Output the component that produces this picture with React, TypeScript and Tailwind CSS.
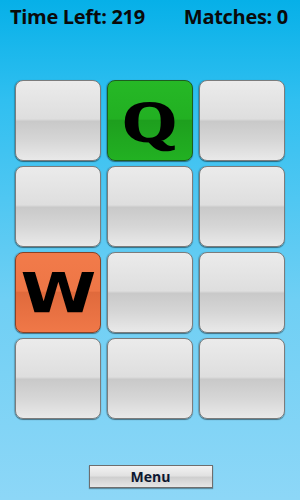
import React from "react";

type Tile = { kind: "grey" | "green" | "orange"; label?: string };

const tiles: Tile[] = [
  { kind: "grey" },
  { kind: "green", label: "Q" },
  { kind: "grey" },
  { kind: "grey" },
  { kind: "grey" },
  { kind: "grey" },
  { kind: "orange", label: "W" },
  { kind: "grey" },
  { kind: "grey" },
  { kind: "grey" },
  { kind: "grey" },
  { kind: "grey" },
];

function TileBox({ t }: { t: Tile }) {
  if (t.kind === "green") {
    return (
      <div className="relative h-[81px] rounded-[8px] border-[1.5px] border-[#1d5e1d] bg-[linear-gradient(180deg,#26b826_0%,#22b022_48%,#1e9f1e_50%,#22b122_100%)] shadow-[0_1px_1px_rgba(0,0,0,0.45),-1px_0_1px_rgba(0,0,0,0.2)] flex items-center justify-center overflow-hidden">
        <span className="font-['Liberation_Serif',serif] font-bold text-[58px] leading-none text-black translate-y-[1px] scale-x-[1.2] [-webkit-text-stroke:2px_black]">
          {t.label}
        </span>
      </div>
    );
  }
  if (t.kind === "orange") {
    return (
      <div className="relative h-[81px] rounded-[8px] border-[1.5px] border-[#8a4226] bg-[linear-gradient(180deg,#f27b4a_0%,#ee7646_48%,#e06a3c_50%,#f07848_100%)] shadow-[0_1px_1px_rgba(0,0,0,0.45),-1px_0_1px_rgba(0,0,0,0.2)] flex items-center justify-center overflow-hidden">
        <span className="font-['DejaVu_Sans',sans-serif] font-bold text-[55px] leading-none text-black scale-x-[1.25] translate-y-[1px]">
          {t.label}
        </span>
      </div>
    );
  }
  return (
    <div className="h-[81px] rounded-[8px] border-[1.5px] border-[#7c7c7c] bg-[linear-gradient(180deg,#ebebeb_0%,#dedede_48%,#c9c9c9_51%,#d6d6d6_75%,#e9e9e9_100%)] shadow-[0_1px_1px_rgba(0,0,0,0.45),-1px_0_1px_rgba(0,0,0,0.2)]" />
  );
}

export default function App() {
  return (
    <div className="w-[300px] h-[500px] flex flex-col bg-[linear-gradient(180deg,#06b0e8_0%,#30bff0_20%,#6fcff4_60%,#8dd7f7_100%)] font-['Open_Sans',sans-serif]">
      <div className="flex justify-between items-center pl-[10px] pr-[12px] pt-[4px] h-[30px]">
        <span className="font-bold text-[20px] text-[#0a0a0a] tracking-[-0.3px]">Time Left: 219</span>
        <span className="font-bold text-[20px] text-[#0a0a0a] tracking-[-0.3px]">Matches: 0</span>
      </div>
      <div className="mt-[50px] pl-[15px] grid grid-cols-[86px_86px_86px] gap-x-[6px] gap-y-[5px]">
        {tiles.map((t, i) => (
          <TileBox key={i} t={t} />
        ))}
      </div>
      <div className="flex-1" />
      <div className="flex justify-center pb-[12px]">
        <button className="w-[124px] h-[23px] ml-[1px] border-[1.5px] border-[#6e6e6e] bg-[linear-gradient(180deg,#f2f2f2_0%,#e2e2e2_45%,#cfcfcf_55%,#e6e6e6_100%)] shadow-[0_1px_1px_rgba(0,0,0,0.35)] flex items-center justify-center">
          <span className="font-['Open_Sans',sans-serif] font-bold text-[14px] text-[#0d1730] leading-none">Menu</span>
        </button>
      </div>
    </div>
  );
}
